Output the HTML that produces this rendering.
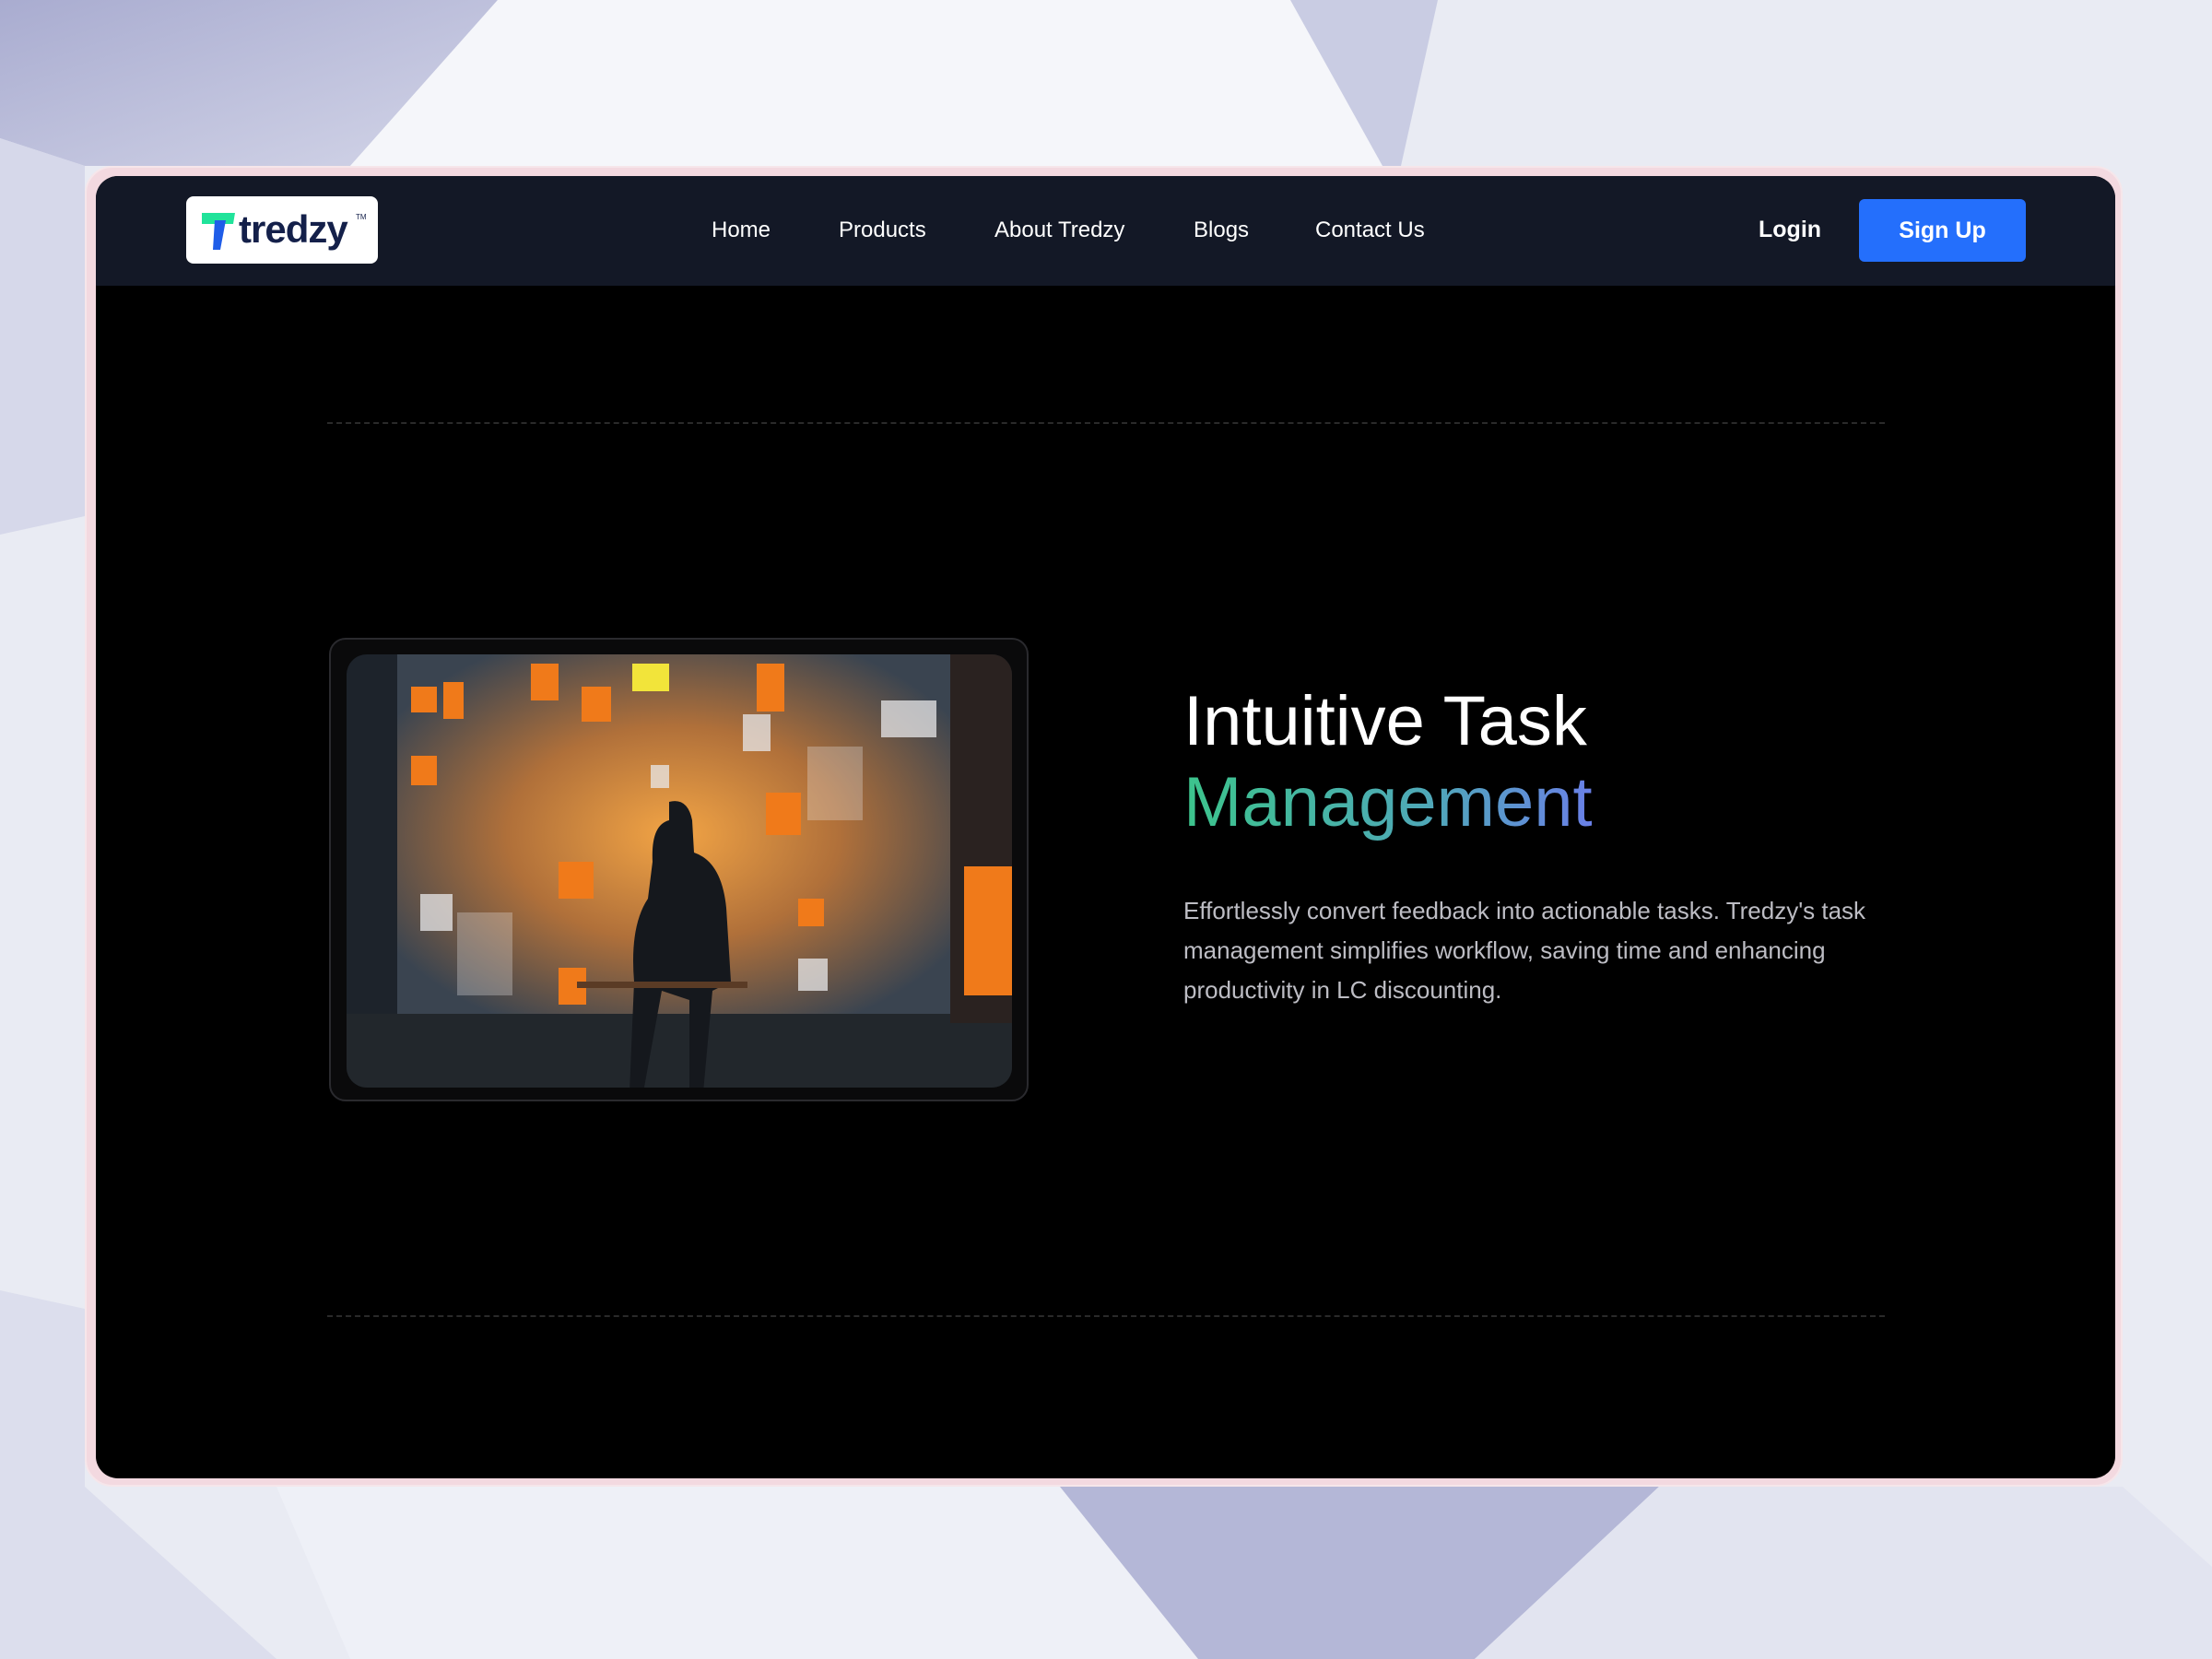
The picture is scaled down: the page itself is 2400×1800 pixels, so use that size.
<!DOCTYPE html>
<html><head><meta charset="utf-8"><style>
*{margin:0;padding:0;box-sizing:border-box}
body{width:2400px;height:1800px;overflow:hidden;background:#e9ebf3;font-family:"Liberation Sans",sans-serif;position:relative}
.bg{position:absolute;left:0;top:0}
.frame{position:absolute;left:92px;top:180px;width:2211px;height:1433px;border-radius:30px;background:#f3d9e0;border:2px solid #f6e6ea}
.card{position:absolute;left:104px;top:191px;width:2191px;height:1413px;border-radius:24px;background:#000;overflow:hidden}
.nav{position:absolute;left:0;top:0;width:100%;height:119px;background:#131826}
.logo{position:absolute;left:98px;top:22px;width:208px;height:73px;background:#fff;border-radius:8px}
.logo .t{position:absolute;left:57px;top:12px;font-size:42px;font-weight:bold;color:#14204a;letter-spacing:-1px}
.logo .tm{position:absolute;left:184px;top:18px;font-size:8px;color:#14204a}
.nl{position:absolute;top:45px;color:#fff;font-size:24px}
.login{position:absolute;left:1804px;top:44px;color:#fff;font-size:25px;font-weight:bold}
.btn{position:absolute;left:1913px;top:25px;width:181px;height:68px;background:#246ffc;border-radius:6px;color:#fff;font-size:25px;font-weight:bold;text-align:center;line-height:68px}
.dash{position:absolute;left:251px;width:1690px;border-top:2px dashed #2a2a2a}
h1{position:absolute;left:1180px;top:548px;font-weight:normal;font-size:76px;line-height:88px;color:#fff}
h1 span{background:linear-gradient(90deg,#3cc48c,#4fa8b8 60%,#6a80e8);-webkit-background-clip:text;background-clip:text;color:transparent}
p{position:absolute;left:1180px;top:776px;width:780px;font-size:26px;line-height:43px;color:#bdbdc4}
.img{position:absolute;left:253px;top:501px;width:759px;height:503px;border:2px solid #2a2a2e;border-radius:18px;background:#0a0a0b}
</style></head><body>
<svg class="bg" width="2400" height="1800">
<defs><linearGradient id="a" x1="0" y1="0" x2="1" y2="1"><stop offset="0" stop-color="#a9acd0"/><stop offset="1" stop-color="#d3d5e8"/></linearGradient></defs>
<polygon points="0,0 540,0 380,180 92,180 0,150" fill="url(#a)"/>
<polygon points="0,150 92,180 92,560 0,580" fill="#d6d8ea"/>
<polygon points="540,0 1480,0 1520,180 380,180" fill="#f5f6fa"/>
<polygon points="1400,0 1560,0 1520,180 1500,180" fill="#c9cce3"/>
<polygon points="0,1400 92,1420 92,1613 300,1800 0,1800" fill="#dcdeed"/>
<polygon points="300,1613 1150,1613 1300,1800 380,1800" fill="#eef0f7"/>
<polygon points="1150,1613 1800,1613 1600,1800 1300,1800" fill="#b4b7d7"/>
<polygon points="1800,1613 2303,1613 2400,1700 2400,1800 1600,1800" fill="#e2e4f0"/>
</svg>
<div class="frame"></div>
<div class="card">
<div class="nav">
<div class="logo"><svg style="position:absolute;left:17px;top:18px" width="36" height="40"><polygon points="0,0 36,0 34,12 0,12" fill="#20e39a"/><polygon points="14,8 26,8 20,40 12,40" fill="#1f5de8"/></svg><div class="t">tredzy</div><div class="tm">TM</div></div>
<div class="nl" style="left:668px">Home</div>
<div class="nl" style="left:806px">Products</div>
<div class="nl" style="left:975px">About Tredzy</div>
<div class="nl" style="left:1191px">Blogs</div>
<div class="nl" style="left:1323px">Contact Us</div>
<div class="login">Login</div>
<div class="btn">Sign Up</div>
</div>
<div class="dash" style="top:267px"></div>
<div class="dash" style="top:1236px"></div>
<div class="img">
<svg style="position:absolute;left:17px;top:16px" width="722" height="470">
<defs><radialGradient id="g" cx="0.5" cy="0.5" r="0.6"><stop offset="0" stop-color="#f2a445"/><stop offset="0.5" stop-color="#b0703a"/><stop offset="1" stop-color="#3a4450"/></radialGradient>
<clipPath id="c"><rect width="722" height="470" rx="22"/></clipPath></defs>
<g clip-path="url(#c)">
<rect width="722" height="470" fill="#1d232b"/>
<rect x="55" y="0" width="600" height="390" fill="url(#g)"/>
<rect x="0" y="390" width="722" height="80" fill="#22272c"/>
<rect x="655" y="0" width="67" height="400" fill="#2a2220"/>
<g fill="#f07a1a"><rect x="70" y="35" width="28" height="28"/><rect x="105" y="30" width="22" height="40"/><rect x="200" y="10" width="30" height="40"/><rect x="255" y="35" width="32" height="38"/><rect x="70" y="110" width="28" height="32"/><rect x="445" y="10" width="30" height="52"/><rect x="370" y="270" width="34" height="40"/><rect x="230" y="340" width="30" height="40"/><rect x="490" y="265" width="28" height="30"/><rect x="670" y="230" width="52" height="140"/><rect x="230" y="225" width="38" height="40"/><rect x="455" y="150" width="38" height="46"/></g>
<g fill="#e8e8ea" opacity="0.75"><rect x="330" y="120" width="20" height="25"/><rect x="80" y="260" width="35" height="40"/><rect x="430" y="65" width="30" height="40"/><rect x="490" y="330" width="32" height="35"/><rect x="120" y="280" width="60" height="90" opacity="0.4"/><rect x="500" y="100" width="60" height="80" opacity="0.4"/><rect x="580" y="50" width="60" height="40"/></g>
<rect x="310" y="10" width="40" height="30" fill="#f2e43a"/>
<path d="M350 160 q20 -5 25 20 l2 35 q30 10 35 60 l5 80 l-20 10 l-10 110 l-15 0 l0 -100 l-30 -10 l-20 110 l-15 0 l5 -120 q-5 -60 15 -90 l5 -40 q-2 -40 18 -45z" fill="#15181d"/>
<rect x="250" y="355" width="185" height="7" fill="#5a3b25"/>
</g></svg>
</div>
<h1>Intuitive Task<br><span>Management</span></h1>
<p>Effortlessly convert feedback into actionable tasks. Tredzy's task management simplifies workflow, saving time and enhancing productivity in LC discounting.</p>
</div>
</body></html>
